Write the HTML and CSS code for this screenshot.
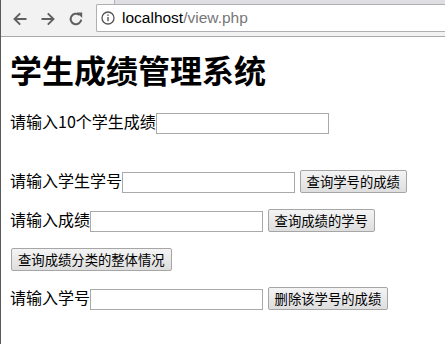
FILE: index.html
```html
<!DOCTYPE html>
<html lang="zh-CN">

<head>
  <meta charset="UTF-8" />
  <title>学生成绩管理系统</title>
  <link rel="stylesheet" href="styles.css">
</head>

<body>
  <div class="window">
    <div class="chrome">
      <div class="tabstrip">
        <div class="tab"></div>
      </div>
      <div class="toolbar">
        <span class="nav-btn">
          <svg width="16" height="16" viewBox="0 0 16 16">
            <path d="M14.5 8H3M8.2 2.3L2.5 8L8.2 13.7" fill="none" stroke="#5f5f5f" stroke-width="1.9" />
          </svg>
        </span>
        <span class="nav-btn">
          <svg width="16" height="16" viewBox="0 0 16 16">
            <path d="M1.5 8H13M7.8 2.3L13.5 8L7.8 13.7" fill="none" stroke="#5f5f5f" stroke-width="1.9" />
          </svg>
        </span>
        <span class="nav-btn">
          <svg width="16" height="16" viewBox="0 0 16 16">
            <path d="M13.2 8.6A5.3 5.3 0 1 1 11.4 4" fill="none" stroke="#5f5f5f" stroke-width="2" />
            <path d="M8.6 1.4H14.2V7Z" fill="#5f5f5f" />
          </svg>
        </span>
        <div class="omnibox">
          <svg class="info" width="14" height="14" viewBox="0 0 14 14">
            <circle cx="7" cy="7" r="6" fill="none" stroke="#555" stroke-width="1.3" />
            <rect x="6.3" y="6" width="1.4" height="4.2" fill="#555" />
            <rect x="6.3" y="3.4" width="1.4" height="1.4" fill="#555" />
          </svg>
          <span class="host">localhost</span><span class="path">/view.php</span>
        </div>
      </div>
    </div>

    <div class="content">
      <h1>学生成绩管理系统</h1>

      <form class="row first">
        请输入10个学生成绩<input type="text" name="scores">
      </form>

      <form class="row">
        请输入学生学号<input type="text" name="sno"> <button type="button">查询学号的成绩</button>
      </form>

      <form class="row">
        请输入成绩<input type="text" name="score"> <button type="button">查询成绩的学号</button>
      </form>

      <form class="row">
        <button type="button">查询成绩分类的整体情况</button>
      </form>

      <form class="row">
        请输入学号<input type="text" name="del"> <button type="button">删除该学号的成绩</button>
      </form>
    </div>
  </div>
</body>

</html>
```

FILE: styles.css
```css
* {
  box-sizing: border-box;
}

body {
  margin: 0;
  background: #fff;
  overflow: hidden;
}

.window {
  height: 100vh;
  border-left: 1px solid #5a5a5a;
}

/* browser chrome */
.chrome {
  background: #f2f2f2;
  border-bottom: 1px solid #a9a9ad;
  height: 37px;
}

.tabstrip {
  height: 5px;
  background: #dfdfe3;
  border-bottom: 1px solid #b4b4ba;
}

.tab {
  width: 114px;
  height: 5px;
  background: #f2f2f2;
  border-right: 1px solid #b4b4ba;
}

.toolbar {
  display: flex;
  align-items: center;
  height: 27px;
  padding-left: 5px;
  margin-top: -1px;
}

.nav-btn {
  width: 28px;
  height: 27px;
  display: flex;
  align-items: center;
  justify-content: center;
  padding-top: 3px;
}

.omnibox {
  flex: 1;
  height: 28px;
  margin-left: 6px;
  display: flex;
  align-items: center;
  background: #fff;
  border: 1px solid #b0b0b4;
  border-right: none;
  border-radius: 2px 0 0 2px;
  padding-left: 4px;
  font-family: "Liberation Sans", Arial, sans-serif;
  font-size: 15.5px;
}

.info {
  margin-right: 7px;
  margin-top: 1px;
}

.host {
  color: #000;
}

.path {
  color: #777;
}

/* page */
.content {
  padding: 0 8px 0 9px;
  font-family: "Noto Sans CJK SC", sans-serif;
  font-size: 16px;
  color: #000;
}

h1 {
  font-family: "Noto Sans CJK SC", sans-serif;
  font-size: 32px;
  font-weight: bold;
  line-height: 37px;
  margin: 14px 0 0;
}

.row {
  margin: 16px 0 0;
  line-height: 23px;
  height: 23px;
}

.row.first {
  margin-top: 22px;
  margin-bottom: 36px;
}

input {
  width: 173px;
  height: 21px;
  border: 1px solid #a9a9a9;
  padding: 1px 2px;
  font-size: 13.33px;
  vertical-align: baseline;
  margin: 0;
}

button {
  height: 23px;
  padding: 0 6px;
  font-family: "Noto Sans CJK SC", sans-serif;
  font-size: 13.33px;
  line-height: 21px;
  color: #000;
  background: linear-gradient(#f4f4f4, #dedede);
  border: 1px solid #a6a6a6;
  border-radius: 2px;
  margin: 0 0 0 1px;
}
```
